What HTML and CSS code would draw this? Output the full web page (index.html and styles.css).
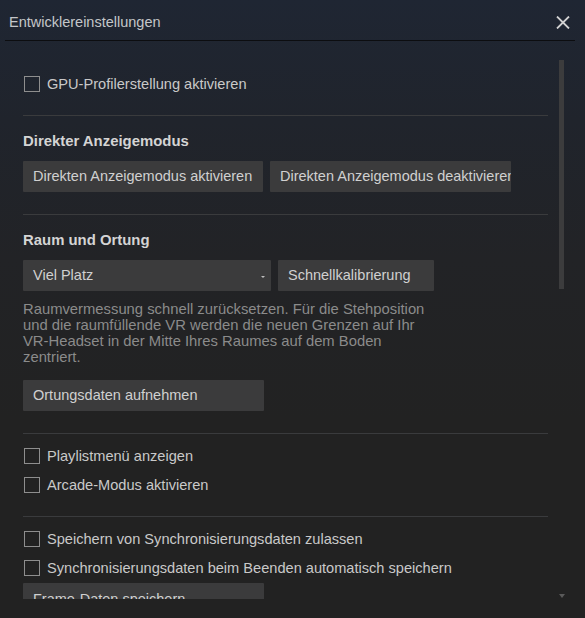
FILE: index.html
```html
<!DOCTYPE html>
<html lang="de">
<head>
<meta charset="utf-8">
<title>Entwicklereinstellungen</title>
<link rel="stylesheet" href="styles.css">
</head>
<body>
<div class="dialog">
  <header class="header">
    <span class="title">Entwicklereinstellungen</span>
    <svg class="close" width="14" height="13" viewBox="0 0 14 13" aria-hidden="true">
      <path d="M1 0.5 L13 12.5 M13 0.5 L1 12.5" stroke="#d2d2d2" stroke-width="1.8" fill="none"/>
    </svg>
  </header>
  <div class="viewport">
    <div class="content">
      <label class="check first"><span class="box"></span><span>GPU-Profilerstellung aktivieren</span></label>
      <div class="sep"></div>
      <h2 class="heading">Direkter Anzeigemodus</h2>
      <div class="row">
        <div class="btn w240">Direkten Anzeigemodus aktivieren</div>
        <div class="btn w241">Direkten Anzeigemodus deaktivieren</div>
      </div>
      <div class="sep"></div>
      <h2 class="heading">Raum und Ortung</h2>
      <div class="row">
        <div class="btn select"><span>Viel Platz</span><span class="caret"></span></div>
        <div class="btn w156">Schnellkalibrierung</div>
      </div>
      <p class="desc">Raumvermessung schnell zurücksetzen. Für die Stehposition<br>und die raumfüllende VR werden die neuen Grenzen auf Ihr<br>VR-Headset in der Mitte Ihres Raumes auf dem Boden<br>zentriert.</p>
      <div class="btn w241 single">Ortungsdaten aufnehmen</div>
      <div class="sep"></div>
      <label class="check grp"><span class="box"></span><span>Playlistmenü anzeigen</span></label>
      <label class="check next"><span class="box"></span><span>Arcade-Modus aktivieren</span></label>
      <div class="sep"></div>
      <label class="check grp"><span class="box"></span><span>Speichern von Synchronisierungsdaten zulassen</span></label>
      <label class="check next"><span class="box"></span><span>Synchronisierungsdaten beim Beenden automatisch speichern</span></label>
      <div class="btn w241 frame">Frame-Daten speichern</div>
    </div>
    <div class="thumb"></div>
  </div>
  <div class="down-arrow"></div>
</div>
</body>
</html>
```

FILE: styles.css
```css
* { box-sizing: border-box; }
html, body {
  margin: 0;
  padding: 0;
  width: 585px;
  height: 618px;
  overflow: hidden;
}
body {
  background: linear-gradient(to bottom, #1f2633 0px, #20242c 120px, #222326 260px, #222222 420px);
  font-family: "Liberation Sans", Arial, sans-serif;
  font-size: 14.6px;
  color: #c8c8c8;
}
.dialog {
  position: relative;
  width: 585px;
  height: 618px;
}
.header {
  height: 41px;
  margin: 0 10px 0 5px;
  border-bottom: 1px solid #0c0d10;
  display: flex;
  align-items: flex-start;
  justify-content: space-between;
}
.title {
  font-size: 14.5px;
  line-height: 16px;
  margin: 14px 0 0 4px;
  color: #c4c6c9;
}
.close {
  margin: 16px 5px 0 0;
}
.viewport {
  position: relative;
  height: 558px;
  overflow: hidden;
}
.content {
  width: 548px;
  padding-left: 23px;
}
.check {
  display: flex;
  align-items: center;
  height: 16px;
  line-height: 16px;
  color: #c9c9c9;
  white-space: nowrap;
}
.check .box {
  width: 16px;
  height: 16px;
  border: 1px solid #8e8e8e;
  margin: 0 7px 0 1px;
  flex: none;
}
.check.first { margin-top: 35px; }
.check.grp { margin-top: 14px; }
.check.next { margin-top: 13px; }
.sep {
  height: 1px;
  background: #3a3b3d;
  margin-top: 23px;
}
.heading {
  margin: 17px 0 0 0;
  font-size: 14.9px;
  line-height: 16px;
  font-weight: bold;
  color: #d4d4d4;
}
.row {
  display: flex;
  gap: 7px;
  margin-top: 12px;
}
.row + .sep { margin-top: 22px; }
.btn {
  height: 31px;
  background: #3b3b3c;
  color: #d0d0d0;
  line-height: 31px;
  padding-left: 10px;
  white-space: nowrap;
  overflow: hidden;
  border-radius: 1px;
  font-size: 14.5px;
}
.w240 { width: 240px; }
.w241 { width: 241px; }
.w156 { width: 156px; }
.select {
  width: 248px;
  display: flex;
  justify-content: space-between;
  align-items: center;
  padding-right: 6px;
}
.caret {
  width: 0;
  height: 0;
  border-left: 2px solid transparent;
  border-right: 2px solid transparent;
  border-top: 2px solid #bdbdbd;
  margin-top: 2px;
}
.desc {
  margin: 10px 0 0 0;
  line-height: 16px;
  color: #8b8b8b;
  font-size: 14.8px;
}
.single { margin-top: 15px; }
.single + .sep { margin-top: 22px; }
.check.next + .sep { margin-top: 23px; }
.frame { margin-top: 7px; line-height: 33px; }
.thumb {
  position: absolute;
  left: 559px;
  top: 19px;
  width: 5px;
  height: 229px;
  background: #3c3c3d;
}
.down-arrow {
  position: absolute;
  left: 559px;
  top: 594px;
  width: 0;
  height: 0;
  border-left: 3px solid transparent;
  border-right: 3px solid transparent;
  border-top: 4px solid #5a5a5a;
}
```
